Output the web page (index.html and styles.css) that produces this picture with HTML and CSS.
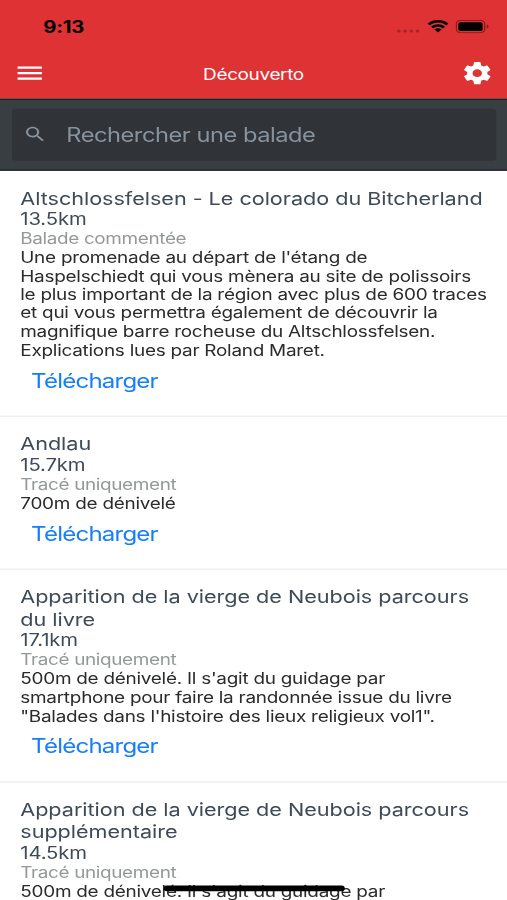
FILE: index.html
```
<!DOCTYPE html>
<html lang="fr">

<head>
    <meta charset="UTF-8">
    <meta name="viewport" content="width=device-width, initial-scale=1.0">
    <title>Découverto</title>
    <link rel="stylesheet" href="styles.css">
</head>

<body>
    <div class="screen">
        <div class="top">
            <div class="status">
                <span class="time">9:13</span>
                <div class="status_icons">
                    <svg class="signal" width="18" height="4" viewBox="0 0 18 4">
                        <circle cx="2" cy="2" r="1.4" />
                        <circle cx="6.6" cy="2" r="1.4" />
                        <circle cx="11.2" cy="2" r="1.4" />
                        <circle cx="15.8" cy="2" r="1.4" />
                    </svg>
                    <svg class="wifi" width="16" height="12" viewBox="0 0 16 12">
                        <path d="M8 2.4c2.3 0 4.4.9 5.9 2.3.1.1.3.1.4 0l1.2-1.2c.1-.1.1-.3 0-.4C11.3-.9 4.7-.9.5 3.1c-.1.1-.1.3 0 .4l1.2 1.2c.1.1.3.1.4 0C3.6 3.3 5.7 2.4 8 2.4z" />
                        <path d="M8 6.1c1.3 0 2.5.5 3.4 1.3.1.1.3.1.4 0L13 6.2c.1-.1.1-.3 0-.4-2.8-2.6-7.2-2.6-10 0-.1.1-.1.3 0 .4l1.2 1.2c.1.1.3.1.4 0C5.5 6.6 6.7 6.1 8 6.1z" />
                        <path d="M10.4 8.8c.1-.1.1-.3 0-.4-1.4-1.2-3.4-1.2-4.8 0-.1.1-.1.3 0 .4l2.2 2.2c.1.1.3.1.4 0z" />
                    </svg>
                    <svg class="battery" width="25" height="12" viewBox="0 0 25 12">
                        <rect class="shell" x=".5" y=".5" width="21" height="11" rx="3" />
                        <path class="cap" d="M23 4v4c.8-.3 1.4-1.1 1.4-2s-.6-1.7-1.4-2z" />
                        <rect x="2" y="2" width="18" height="8" rx="1.5" />
                    </svg>
                </div>
            </div>

            <div class="header">
                <svg class="icon" width="24" height="24" viewBox="0 0 24 24">
                    <path d="M3 18h18v-2H3v2zm0-5h18v-2H3v2zm0-7v2h18V6H3z" />
                </svg>
                <h1>Découverto</h1>
                <svg class="icon" width="24" height="24" viewBox="0 0 24 24">
                    <path d="M19.43 12.98c.04-.32.07-.64.07-.98s-.03-.66-.07-.98l2.11-1.65c.19-.15.24-.42.12-.64l-2-3.46c-.12-.22-.39-.3-.61-.22l-2.49 1c-.52-.4-1.08-.73-1.69-.98l-.38-2.65C14.46 2.18 14.25 2 14 2h-4c-.25 0-.46.18-.49.42l-.38 2.65c-.61.25-1.17.59-1.69.98l-2.49-1c-.23-.09-.49 0-.61.22l-2 3.46c-.13.22-.07.49.12.64l2.11 1.65c-.04.32-.07.65-.07.98s.03.66.07.98l-2.11 1.65c-.19.15-.24.42-.12.64l2 3.46c.12.22.39.3.61.22l2.49-1c.52.4 1.08.73 1.69.98l.38 2.65c.03.24.24.42.49.42h4c.25 0 .46-.18.49-.42l.38-2.65c.61-.25 1.17-.59 1.69-.98l2.49 1c.23.09.49 0 .61-.22l2-3.46c.12-.22.07-.49-.12-.64l-2.11-1.65zM12 15.5c-1.93 0-3.5-1.57-3.5-3.5s1.57-3.5 3.5-3.5 3.5 1.57 3.5 3.5-1.57 3.5-3.5 3.5z" />
                </svg>
            </div>
        </div>

        <div class="search">
            <div class="search_box">
                <svg width="18" height="18" viewBox="0 0 24 24">
                    <path d="M15.5 14h-.79l-.28-.27C15.41 12.59 16 11.11 16 9.5 16 5.91 13.09 3 9.5 3S3 5.91 3 9.5 5.91 16 9.5 16c1.61 0 3.09-.59 4.23-1.57l.27.28v.79l5 4.99L20.49 19l-4.99-5zm-6 0C7.01 14 5 11.99 5 9.5S7.01 5 9.5 5 14 7.01 14 9.5 11.99 14 9.5 14z" />
                </svg>
                <span>Rechercher une balade</span>
            </div>
        </div>

        <ul class="list">
            <li>
                <h2>Altschlossfelsen - Le colorado du Bitcherland</h2>
                <p class="km">13.5km</p>
                <p class="type">Balade commentée</p>
                <p class="desc">Une promenade au départ de l'étang de<br>Haspelschiedt qui vous mènera au site de polissoirs<br>le plus important de la région avec plus de 600 traces<br>et qui vous permettra également de découvrir la<br>magnifique barre rocheuse du Altschlossfelsen.<br>Explications lues par Roland Maret.</p>
                <a class="btn" href="#">Télécharger</a>
            </li>
            <li>
                <h2>Andlau</h2>
                <p class="km">15.7km</p>
                <p class="type">Tracé uniquement</p>
                <p class="desc">700m de dénivelé</p>
                <a class="btn" href="#">Télécharger</a>
            </li>
            <li>
                <h2>Apparition de la vierge de Neubois parcours<br>du livre</h2>
                <p class="km">17.1km</p>
                <p class="type">Tracé uniquement</p>
                <p class="desc">500m de dénivelé. Il s'agit du guidage par<br>smartphone pour faire la randonnée issue du livre<br>"Balades dans l'histoire des lieux religieux vol1".</p>
                <a class="btn" href="#">Télécharger</a>
            </li>
            <li>
                <h2>Apparition de la vierge de Neubois parcours<br>supplémentaire</h2>
                <p class="km">14.5km</p>
                <p class="type">Tracé uniquement</p>
                <p class="desc">500m de dénivelé. Il s'agit du guidage par</p>
            </li>
        </ul>
        <div class="home_bar"></div>
    </div>
</body>

</html>
```
FILE: styles.css
```
* {
    margin: 0;
    padding: 0;
    box-sizing: border-box;
}

body {
    width: 507px;
    height: 900px;
    overflow: hidden;
    background: #fff;
}

/* 375x812 phone screen stretched to the window */
.screen {
    width: 375px;
    height: 812px;
    position: relative;
    overflow: hidden;
    transform: scale(1.352, 1.1084);
    transform-origin: 0 0;
    font-family: Inter, "Liberation Sans", sans-serif;
    white-space: nowrap;
}

.top {
    background: #de3234;
}

.status {
    height: 44px;
    padding: 4px 13.5px 0 32px;
    display: flex;
    align-items: center;
    justify-content: space-between;
}

.time {
    font-size: 15px;
    font-weight: 700;
    letter-spacing: -0.2px;
}

.status_icons {
    display: flex;
    align-items: center;
    gap: 5px;
}

.signal {
    margin-top: 7px;
    opacity: 0.25;
}

.shell {
    fill: none;
    stroke: #000;
    opacity: 0.4;
}

.cap {
    opacity: 0.4;
}

.header {
    height: 44.6px;
    padding: 0 10px;
    display: flex;
    align-items: center;
    justify-content: space-between;
    color: #fff;
}

.header h1 {
    font-size: 14px;
    font-weight: 400;
    letter-spacing: -0.25px;
}

.icon {
    fill: #fff;
}

.search {
    height: 65.8px;
    padding: 8.8px 8px 8px 9px;
    background: #393e42;
    border-top: 1px solid #16191b;
    border-bottom: 1px solid #16191b;
}

.search_box {
    height: 47px;
    padding: 0 0 1px 7.5px;
    display: flex;
    align-items: center;
    gap: 14.5px;
    border-radius: 3px;
    background: #303337;
    color: #86939e;
    font-size: 17.5px;
    letter-spacing: -0.35px;
}

.search_box svg {
    fill: #86939e;
}

.list {
    list-style: none;
}

.list li {
    padding: 14.2px 15px 12.4px;
    border-bottom: 1px solid #e9e9ec;
}

.list h2 {
    color: #3f4a59;
    font-size: 16px;
    font-weight: 400;
    line-height: 20.3px;
    letter-spacing: -0.03px;
}

.km {
    padding-top: 0.6px;
    color: #3f4a59;
    font-size: 15px;
    line-height: 17.8px;
    letter-spacing: -0.1px;
}

.type {
    color: #949998;
    font-size: 14px;
    line-height: 16.8px;
    letter-spacing: -0.27px;
}

.desc {
    color: #2b2b2b;
    font-size: 14px;
    line-height: 16.8px;
    letter-spacing: -0.19px;
}

.btn {
    display: block;
    padding: 8px;
    color: #147efb;
    font-size: 17.8px;
    line-height: 22px;
    letter-spacing: -0.58px;
    text-decoration: none;
}

.home_bar {
    width: 134px;
    height: 5px;
    position: absolute;
    left: 121px;
    bottom: 8px;
    border-radius: 3px;
    background: #000;
}
```
